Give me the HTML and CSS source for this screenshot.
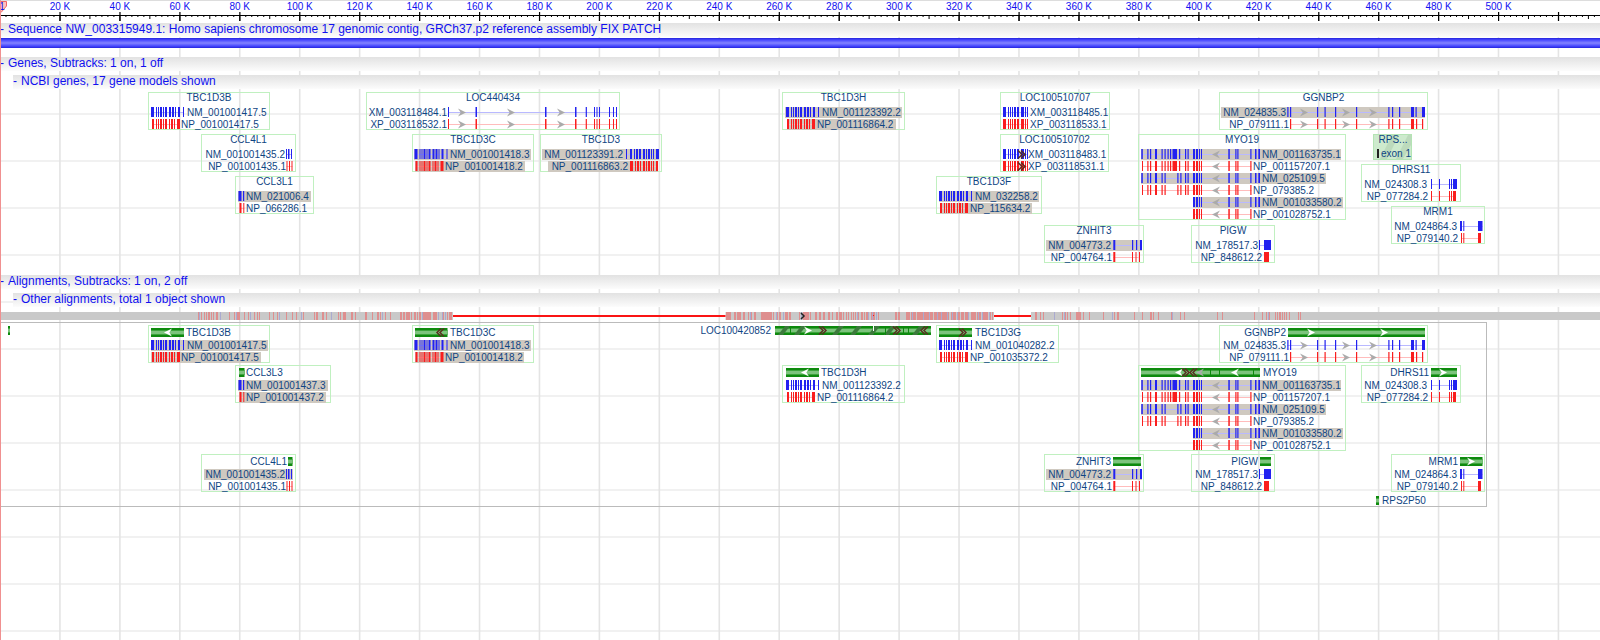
FILE: index.html
```
<!DOCTYPE html>
<html lang="en">
<head>
    <meta charset="UTF-8">
    <meta name="viewport" content="width=device-width, initial-scale=1.0">
    <title>NW_003315949.1 - Sequence Viewer</title>
    <link rel="stylesheet" href="styles.css">
</head>
<body>
    <div id="viewer">
        <svg id="grid" aria-hidden="true"></svg>
        <svg id="ruler"></svg>

        <button class="track-title" type="button"><span class="sign">-</span><span>Sequence NW_003315949.1: Homo sapiens chromosome 17 genomic contig, GRCh37.p2 reference assembly FIX PATCH</span></button>
        <div class="sequence-bar"></div>

        <button class="track-title" type="button"><span class="sign">-</span><span>Genes, Subtracks: 1 on, 1 off</span></button>
        <button class="track-title sub" type="button"><span class="sign">-</span><span>NCBI genes, 17 gene models shown</span></button>
        <svg id="genes" class="track"></svg>

        <button class="track-title" type="button"><span class="sign">-</span><span>Alignments, Subtracks: 1 on, 2 off</span></button>
        <button class="track-title sub" type="button"><span class="sign">-</span><span>Other alignments, total 1 object shown</span></button>
        <svg id="alignments" class="track"></svg>

        <div id="marker"></div>
    </div>

    <script src="viewer.js"></script>
</body>
</html>
```

FILE: styles.css
```
body {
    margin: 0;
    background: #fff;
    font-family: "Liberation Sans", Arial, sans-serif;
}

#viewer {
    position: relative;
    min-height: 100vh;
    overflow: hidden;
}

svg {
    display: block;
    width: 100%;
}

text {
    font-size: 10px;
    fill: #0f4583;
}

/* grid behind all tracks */
#grid {
    position: absolute;
    top: 0;
    left: 0;
    height: 100%;
}

#grid rect {
    fill: #e4e4e4;
}

#grid .across {
    fill: #f1f1f1;
}

#ruler {
    position: relative;
    height: 23px;
    background: #fff;
    border-top: 1px solid #ddd;
    box-sizing: border-box;
}

#ruler text {
    fill: #1010f0;
    text-anchor: middle;
}

#ruler .flag {
    fill: #ffc0c0;
    stroke: #e66;
}

/* track headers */
.track-title {
    position: relative;
    display: flex;
    gap: 4px;
    width: 100%;
    height: 14px;
    margin: 0 0 4px;
    padding: 0;
    border: none;
    background: linear-gradient(#e2e2e2, #fcfcfc);
    color: #1010f0;
    font-family: inherit;
    font-size: 12px;
    line-height: 12px;
    text-align: left;
    white-space: nowrap;
    cursor: pointer;
}

.track-title.sub {
    width: auto;
    min-width: calc(100% - 13px);
    margin: 0 0 0 13px;
}

.sign {
    width: 4px;
}

.sequence-bar {
    position: relative;
    height: 10px;
    margin: -3px 0 9px;
    background: linear-gradient(#2424dc, #4848ff 20%, #8484ff 50%, #4848ff 80%, #2424dc);
}

.track {
    position: relative;
}

#genes {
    height: 186px;
}

#alignments {
    height: 206px;
}

.box {
    fill: none;
    stroke: #c0f0c0;
}

.frame {
    fill: none;
    stroke: #bbb;
}

.shade {
    fill: #cfc9c0;
}

.rna {
    fill: #2222f0;
}

.cds {
    fill: #fa1e1e;
}

.rna.intron {
    fill: #b9b9ff;
}

.cds.intron {
    fill: #ffbcbc;
}

.arrow {
    fill: #aaa;
}

.arrow.white {
    fill: #fff;
}

.chevron {
    fill: none;
    stroke: #5a2f22;
    stroke-width: 1.5;
}

.chevron.black {
    stroke: #222;
}

.bar-dark {
    fill: #0d8a0d;
}

.bar-mid {
    fill: #3da33d;
}

.bar-light {
    fill: #7cc47c;
}

.stripe {
    fill: #3c7a3c;
}

.pseudo {
    fill: #cdeacd;
    stroke: #b4e4b4;
}

.pseudo-stripe {
    fill: #bcdabc;
}

.exon-mark {
    fill: #222;
}

.coverage {
    fill: #c9c9c9;
}

.mismatch {
    fill: #de8f8f;
}

.mismatch.blue {
    fill: #aaaad0;
}

.gap {
    fill: #fa1414;
}

#marker {
    position: absolute;
    top: 0;
    left: 0;
    width: 1px;
    height: 100%;
    background: #f09090;
}
```

FILE: viewer.js
```
const NS = 'http://www.w3.org/2000/svg';
const VIEW = 1600;       // units across the whole window
const K20 = 59.94;       // units per 20 K
let scale = 1;

function add(parent, tag, attrs, text) {
    const el = document.createElementNS(NS, tag);
    for (const key in attrs) {
        el.setAttribute(key, attrs[key]);
    }
    if (text) {
        el.textContent = text;
    }
    parent.appendChild(el);
    return el;
}

function rect(svg, cls, x, y, w, h) {
    add(svg, 'rect', { class: cls, x: x * scale, y: y, width: w * scale, height: h });
}

function label(svg, x, y, text, anchor) {
    add(svg, 'text', { x: x * scale, y: y, 'text-anchor': anchor }, text);
}

function arrow(svg, x, y, dir, cls) {
    const cx = x * scale;
    const d = dir * 4;
    add(svg, 'path', {
        class: 'arrow ' + (cls || ''),
        d: `M${cx - d} ${y - 4}L${cx + d} ${y}L${cx - d} ${y + 4}L${cx - d / 3} ${y}Z`
    });
}

function chevrons(svg, x, y, dir) {
    const cx = x * scale;
    for (const o of [-2, 1]) {
        add(svg, 'path', {
            class: 'chevron',
            d: `M${cx + o - dir * 2} ${y - 4}L${cx + o + dir * 2} ${y}L${cx + o - dir * 2} ${y + 4}`
        });
    }
}

// exon lists: [start, width]
const tbcRna = [[0, 3], [5, 1], [7, 1], [9, 2], [12, 1], [14, 2], [18, 2], [21, 2], [24, 1], [27, 2], [32, 1]];
const tbcCds = [[1, 2], [5, 1], [7, 1], [9, 2], [12, 1], [14, 2], [18, 1], [20, 2], [23, 1], [26, 3]];
const locRna = [[0, 3], [5, 1], [7, 1], [9, 1], [11, 2], [14, 2], [18, 3], [22, 1], [24, 1]];

const shift = (list, by) => list.map(([x, w]) => [x + by, w]);
const flip = (list, end) => list.map(([x, w]) => [end - x - w, w]);

const xmLoc = [[448, 1], [475.5, 1.5], [545, 1.5], [575, 1.5], [585.7, 1.2], [594, 1], [596.5, 1], [599, 1], [609, 1], [613, 1], [616, 1]];
const ggRna = [[1287.3, 1.2], [1290, 1.2], [1317, 1.2], [1324.5, 1.2], [1335, 1.2], [1356, 1.2], [1388.3, 1.2], [1392, 1.2], [1399, 1.2], [1411, 3], [1415.5, 1.2], [1422, 3]];
const ggCds = [[1290, 1.2], [1317, 1.2], [1324.5, 1.2], [1335, 1.2], [1356, 1.2], [1388.3, 1.2], [1392, 1.2], [1399, 1.2], [1411, 3], [1416, 1.2], [1422, 1.2]];
const myoTail = [[1193, 2], [1196, 2], [1199, 1], [1201, 1], [1228.3, 1.5], [1235.3, 1.2], [1237.3, 1.2], [1250.3, 1.2]];
const myoLeft = [[1147.3, 1.2], [1150, 1.2], [1155, 2], [1161.5, 1.2], [1164.5, 1.2]];
const myoLong = [...myoLeft, [1167.5, 1.2], [1170, 1.2], [1172.5, 4.5], [1179, 1.2], [1185, 1.2], [1187.5, 1.2], ...myoTail];
const myoShort = [...myoLeft, [1177.3, 1.2], [1180.3, 1.2], [1185, 1.2], [1187.5, 1.2], ...myoTail];
const myoEnd = [[1255, 1.5], [1258.3, 1.7]];
const znRna = [[1113.3, 2], [1132, 1.2], [1136, 1.2], [1140, 2]];
const znCds = [[1113.3, 2], [1132, 1], [1135.5, 1], [1139, 1]];
const dhRna = [[1431, 1], [1439, 1], [1449, 1], [1451, 1], [1453, 4]];
const dhCds = [[1431, 1], [1439, 1], [1449, 1], [1451, 1], [1453, 3]];
const mrmRna = [[1460, 2], [1463.3, 1], [1478, 4.5]];
const mrmCds = [[1461, 1], [1463.3, 1], [1478, 3]];

const models = {
    TBC1D3B: { x: 148.5, end: 269.5, rows: [
        { name: 'NM_001001417.5', at: 187, exons: shift(tbcRna, 151) },
        { name: 'NP_001001417.5', at: 181, exons: shift(tbcCds, 151) }] },
    CCL4L1: { x: 201.5, end: 295.5, rows: [
        { name: 'NM_001001435.2', to: 285, exons: [[286, 1], [288, 1.5], [291, 1]] },
        { name: 'NP_001001435.1', to: 286, exons: [[286.5, 1], [289, 1], [291.5, 1]] }] },
    CCL3L1: { x: 235.5, end: 313.5, rows: [
        { name: 'NM_021006.4', at: 246, exons: [[238.5, 3], [243, 1.2]] },
        { name: 'NP_066286.1', at: 246, exons: [[239.5, 2], [243.3, 1]] }] },
    LOC440434: { x: 366.5, end: 619.5, arrows: [462, 511, 561], dir: 1, rows: [
        { name: 'XM_003118484.1', to: 447, exons: xmLoc },
        { name: 'XP_003118532.1', to: 447, exons: xmLoc }] },
    TBC1D3C: { x: 412.5, end: 533.5, rows: [
        { name: 'NM_001001418.3', at: 450, exons: shift(tbcRna, 414.5) },
        { name: 'NP_001001418.2', at: 445, exons: shift(tbcCds, 414.5) }] },
    TBC1D3: { x: 540.5, end: 661.5, rows: [
        { name: 'NM_001123391.2', to: 623, exons: flip(tbcRna, 659) },
        { name: 'NP_001116863.2', to: 628, exons: flip(tbcCds, 659) }] },
    TBC1D3H: { x: 782.5, end: 904.5, rows: [
        { name: 'NM_001123392.2', at: 822, exons: shift(tbcRna, 786) },
        { name: 'NP_001116864.2', at: 817, exons: shift(tbcCds, 786) }] },
    LOC100510707: { x: 1000.5, end: 1109.5, rows: [
        { name: 'XM_003118485.1', at: 1030, exons: shift(locRna, 1003) },
        { name: 'XP_003118533.1', at: 1030, exons: shift(locRna, 1003) }] },
    LOC100510702: { x: 1000.5, end: 1108.5, chevrons: 1022, rows: [
        { name: 'XM_003118483.1', at: 1028, exons: shift(locRna, 1003) },
        { name: 'XP_003118531.1', at: 1028, exons: shift(locRna, 1003) }] },
    TBC1D3F: { x: 936.5, end: 1041.5, rows: [
        { name: 'NM_032258.2', at: 975, exons: shift(tbcRna, 939) },
        { name: 'NP_115634.2', at: 970, exons: shift(tbcCds, 939) }] },
    TBC1D3G: { x: 936.5, end: 1058.5, rows: [
        { name: 'NM_001040282.2', at: 975, exons: shift(tbcRna, 939) },
        { name: 'NP_001035372.2', at: 970, exons: shift(tbcCds, 939) }] },
    CCL3L3: { x: 235.5, end: 330.5, rows: [
        { name: 'NM_001001437.3', at: 246, exons: [[238.5, 3], [243, 1.2]] },
        { name: 'NP_001001437.2', at: 246, exons: [[239.5, 2], [243.3, 1]] }] },
    ZNHIT3: { x: 1044.5, end: 1143.5, rows: [
        { name: 'NM_004773.2', to: 1111, exons: znRna },
        { name: 'NP_004764.1', to: 1112, exons: znCds }] },
    GGNBP2: { x: 1219.5, end: 1427.5, arrows: [1304, 1346, 1373], dir: 1, rows: [
        { name: 'NM_024835.3', to: 1286, exons: ggRna },
        { name: 'NP_079111.1', to: 1289, exons: ggCds }] },
    MYO19: { x: 1138.5, end: 1345.5, arrows: [1216], dir: -1, rows: [
        { name: 'NM_001163735.1', at: 1262, exons: [[1141.3, 1.5], ...myoLong, ...myoEnd] },
        { name: 'NP_001157207.1', at: 1253, exons: [[1142, 1], ...myoLong] },
        { name: 'NM_025109.5', at: 1262, exons: [[1141.3, 1.5], ...myoShort, ...myoEnd] },
        { name: 'NP_079385.2', at: 1253, exons: [[1142, 1], ...myoShort] },
        { name: 'NM_001033580.2', at: 1262, exons: [...myoTail, ...myoEnd] },
        { name: 'NP_001028752.1', at: 1253, exons: myoTail }] },
    DHRS11: { x: 1361.5, end: 1460.5, rows: [
        { name: 'NM_024308.3', to: 1427, exons: dhRna },
        { name: 'NP_077284.2', to: 1428, exons: dhCds }] },
    MRM1: { x: 1391.5, end: 1484.5, rows: [
        { name: 'NM_024864.3', to: 1457, exons: mrmRna },
        { name: 'NP_079140.2', to: 1458, exons: mrmCds }] },
    PIGW: { x: 1191.5, end: 1274.5, rows: [
        { name: 'NM_178517.3', to: 1258, exons: [[1259, 1], [1264, 7]] },
        { name: 'NP_848612.2', to: 1262, exons: [[1264, 5]] }] }
};

// [gene, top, shaded rows: index -> [from, to]]
const geneTrack = [
    ['TBC1D3B', 3, {}],
    ['CCL4L1', 45, {}],
    ['CCL3L1', 87, { 0: [238, 311] }],
    ['LOC440434', 3, {}],
    ['TBC1D3C', 45, { 0: [414, 531], 1: [415, 525] }],
    ['TBC1D3', 45, { 0: [542, 659], 1: [548, 658] }],
    ['TBC1D3H', 3, { 0: [785, 902], 1: [787, 896] }],
    ['LOC100510707', 3, {}],
    ['LOC100510702', 45, {}],
    ['TBC1D3F', 87, { 0: [939, 1039], 1: [940, 1032] }],
    ['ZNHIT3', 136, { 0: [1046, 1142] }],
    ['GGNBP2', 3, { 0: [1221, 1425] }],
    ['MYO19', 45, { 0: [1141, 1341], 2: [1141, 1326], 4: [1193, 1343] }],
    ['DHRS11', 75, {}],
    ['MRM1', 117, {}],
    ['PIGW', 136, {}]
];

// [gene, top, shaded rows, bar start, bar end, white arrows, direction, title x, title anchor]
const alignTrack = [
    ['TBC1D3B', 18, { 0: [151, 268], 1: [151, 261] }, 151, 184, [168], -1, 186, 'start'],
    ['CCL3L3', 58, { 0: [238, 328], 1: [239, 326] }, 239, 244.5, [], 1, 246, 'start'],
    ['CCL4L1', 147, { 0: [204, 293] }, 288, 292.5, [], 1, 287, 'end'],
    ['TBC1D3C', 18, { 0: [414, 531], 1: [415, 524] }, 415, 447.5, [], 1, 450, 'start'],
    ['TBC1D3H', 58, {}, 786, 819, [805], -1, 821, 'start'],
    ['TBC1D3G', 18, {}, 939, 972, [], 1, 975, 'start'],
    ['GGNBP2', 18, {}, 1288, 1425, [1311, 1384], 1, 1286, 'end'],
    ['MYO19', 58, { 0: [1141, 1341], 2: [1141, 1326], 4: [1193, 1343] }, 1141, 1260, [1179, 1235], -1, 1263, 'start'],
    ['DHRS11', 58, {}, 1431, 1457, [1443], 1, 1429, 'end'],
    ['ZNHIT3', 147, { 0: [1046, 1142] }, 1113, 1141, [], 1, 1111, 'end'],
    ['PIGW', 147, {}, 1260, 1271, [], 1, 1258, 'end'],
    ['MRM1', 147, {}, 1460, 1482.5, [1471], 1, 1458, 'end']
];

function drawModel(svg, name, top, shades) {
    const m = models[name];
    rect(svg, 'box', m.x, top + 0.5, m.end - m.x, 13 + m.rows.length * 12);
    m.rows.forEach((row, i) => {
        const y = top + 15 + i * 12;
        const kind = i % 2 ? 'cds' : 'rna';
        if (shades[i]) {
            rect(svg, 'shade', shades[i][0], y, shades[i][1] - shades[i][0], 11);
        }
        const first = Math.min(...row.exons.map(e => e[0]));
        const last = Math.max(...row.exons.map(e => e[0] + e[1]));
        rect(svg, kind + ' intron', first, y + 5, last - first, 1);
        row.exons.forEach(e => rect(svg, kind, e[0], y, e[1], 10));
        (m.arrows || []).forEach(x => arrow(svg, x, y + 5.5, m.dir));
        if (m.chevrons) {
            chevrons(svg, m.chevrons, y + 5.5, 1);
        }
        label(svg, row.at || row.to, y + 9, row.name, row.at ? 'start' : 'end');
    });
}

function drawBar(svg, x, end, y) {
    rect(svg, 'bar-dark', x, y, end - x, 9);
    rect(svg, 'bar-mid', x, y + 2, end - x, 5);
    rect(svg, 'bar-light', x, y + 3, end - x, 3);
}

function drawRuler() {
    const svg = document.getElementById('ruler');
    svg.innerHTML = '';
    rect(svg, 'ruler-line', 0, 14, VIEW, 1);
    for (let i = 1; i * K20 / 20 < VIEW; i++) {
        const x = i * K20 / 20;
        if (i % 2 === 0) {
            rect(svg, '', x - 0.5, 14, 1, i % 20 === 0 ? 6 : i % 10 === 0 ? 4 : 2);
        }
        if (i % 20 === 0) {
            rect(svg, '', x - 0.5, 11, 1.2, 9);
            if (i <= 500) {
                label(svg, x, 9, i + ' K', 'middle');
            }
        }
    }
    add(svg, 'path', { class: 'flag', d: 'M-1 0.5H6.5V5L1 11.5H-1Z' });
    add(svg, 'text', { x: 2, y: 9 }, '1');
}

function drawGrid() {
    const svg = document.getElementById('grid');
    svg.innerHTML = '';
    const height = document.getElementById('viewer').clientHeight;
    for (let y = 19; y < height; y += 47) {
        rect(svg, 'across', 0, y, VIEW, 2);
    }
    for (let x = K20; x < VIEW; x += K20) {
        rect(svg, '', x - 0.8, 0, 1.6, height);
    }
}

function drawGenes() {
    const svg = document.getElementById('genes');
    svg.innerHTML = '';
    geneTrack.forEach(([name, top, shades]) => {
        drawModel(svg, name, top, shades);
        label(svg, (models[name].x + models[name].end) / 2, top + 9, name, 'middle');
    });
    // pseudogene
    rect(svg, 'pseudo', 1373.5, 45.5, 38, 25);
    add(svg, 'path', { class: 'pseudo-stripe', d: `M${1380 * scale} 70l12 -24h7l-12 24zM${1396 * scale} 70l12 -24h3v10l-8 14z` });
    rect(svg, 'exon-mark', 1377, 60, 2, 9);
    label(svg, 1393, 54, 'RPS...', 'middle');
    label(svg, 1381, 68, 'exon 1', 'start');
}

// [from, to, share of mismatching columns]
const density = [
    [196, 240, 0.5], [240, 275, 0.12], [275, 330, 0.3], [330, 365, 0.2], [365, 400, 0.4], [400, 452, 0.7],
    [726, 780, 0.5], [780, 830, 0.45], [830, 875, 0.55], [875, 905, 0.3], [905, 993, 0.85],
    [1032, 1070, 0.35], [1070, 1110, 0.25], [1110, 1180, 0.15], [1180, 1225, 0.15], [1250, 1303, 0.25]
];

function drawCoverage(svg) {
    rect(svg, 'coverage', 0, 5, 453, 8);
    rect(svg, 'coverage', 725.5, 5, 268.5, 8);
    rect(svg, 'coverage', 1031, 5, VIEW - 1031, 8);
    let seed = 17;
    density.forEach(([from, to, share]) => {
        for (let x = from; x < to; x++) {
            seed = (seed * 1103515245 + 12345) % 2147483648;
            const r = seed / 2147483648;
            if (r < share) {
                rect(svg, r < share * 0.12 ? 'mismatch blue' : 'mismatch', x, 5, 1, 8);
            }
        }
    });
    rect(svg, 'gap', 453, 8, 272.5, 2);
    rect(svg, 'gap', 994, 8, 37, 2);
    rect(svg, 'gap', 873, 8, 1, 1);
    add(svg, 'path', { class: 'chevron black', d: `M${801 * scale} 6l3 3l-3 3` });
}

function drawAlignments() {
    const svg = document.getElementById('alignments');
    svg.innerHTML = '';
    drawCoverage(svg);
    rect(svg, 'frame', -1, 15.5, 1487.5, 184);
    drawBar(svg, 8, 10, 19);

    alignTrack.forEach(([name, top, shades, x, end, arrows, dir, titleX, anchor]) => {
        drawModel(svg, name, top, shades);
        drawBar(svg, x, end, top + 3);
        arrows.forEach(a => arrow(svg, a, top + 7.5, dir, 'white'));
        label(svg, titleX, top + 11, name, anchor);
    });
    chevrons(svg, 441, 25.5, -1);
    chevrons(svg, 963, 25.5, 1);
    chevrons(svg, 1186, 65.5, 1);
    chevrons(svg, 1194, 65.5, -1);
    arrow(svg, 1200, 65.5, -1);
    [1210, 1219, 1253].forEach(x => rect(svg, 'bar-dark', x, 61, 1, 9));

    drawBar(svg, 775, 931, 19);
    for (const x of [778, 794, 832, 850, 868, 884, 912]) {
        add(svg, 'path', { class: 'stripe', d: `M${x * scale} 28l7 -9h5l-7 9z` });
    }
    [790, 885, 903, 908].forEach(x => rect(svg, 'bar-dark', x, 19, 1, 9));
    arrow(svg, 808, 23.5, 1, 'white');
    rect(svg, 'arrow white', 873, 19, 1, 5);
    chevrons(svg, 823, 23.5, 1);
    chevrons(svg, 897, 23.5, 1);
    chevrons(svg, 925, 23.5, -1);
    label(svg, 771, 27, 'LOC100420852', 'end');

    drawBar(svg, 1376, 1379, 189);
    label(svg, 1382, 197, 'RPS2P50', 'start');
}

function draw() {
    scale = document.getElementById('viewer').clientWidth / VIEW;
    drawGrid();
    drawRuler();
    drawGenes();
    drawAlignments();
}

draw();
window.addEventListener('resize', draw);
```
